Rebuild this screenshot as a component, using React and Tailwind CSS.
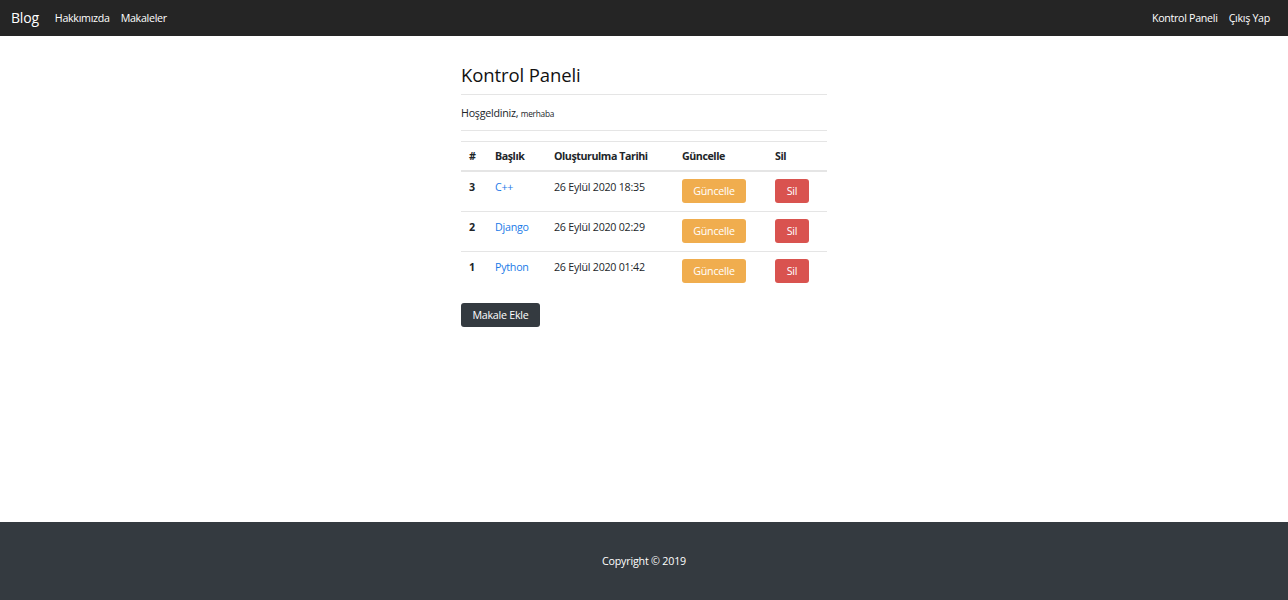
import React from "react";

const rows = [
  { id: 3, title: "C++", date: "26 Eylül 2020 18:35" },
  { id: 2, title: "Django", date: "26 Eylül 2020 02:29" },
  { id: 1, title: "Python", date: "26 Eylül 2020 01:42" },
];

const th =
  "border-b-2 border-[#e5e5e5] px-[8px] pb-[7px] pt-[7px] text-left font-bold leading-[14px] tracking-[-0.45px]";

export default function App() {
  return (
    <div className="flex h-[600px] flex-col bg-white font-['Open_Sans',sans-serif] text-[#212529]">
      <nav className="flex h-[36px] shrink-0 items-center justify-between bg-[#252525] pl-[11px] pr-[18px] text-white">
        <div className="flex items-center">
          <span className="text-[14px] leading-none tracking-[-0.2px]">Blog</span>
          <span className="ml-[16px] text-[10.7px] tracking-[-0.3px]">Hakkımızda</span>
          <span className="ml-[11px] text-[10.7px] tracking-[-0.3px]">Makaleler</span>
        </div>
        <div className="flex items-center text-[10.7px] tracking-[-0.3px]">
          <span>Kontrol Paneli</span>
          <span className="ml-[11px]">Çıkış Yap</span>
        </div>
      </nav>
      <main className="flex flex-1 justify-center">
        <div className="w-[366px] pt-[27px]">
          <h3 className="text-[18.5px] font-medium leading-[24px] tracking-[-0.1px] text-[#111]">Kontrol Paneli</h3>
          <hr className="mt-[7px] border-t border-[#e5e5e5]" />
          <p className="mt-[10px] text-[10.7px] leading-[16px] tracking-[-0.25px]">
            Hoşgeldiniz, <small className="text-[8.3px]">merhaba</small>
          </p>
          <hr className="mt-[8px] border-t border-[#e5e5e5]" />
          <table className="mt-[10px] w-full border-collapse text-[10.7px] tracking-[-0.25px]">
            <thead>
              <tr className="border-t border-[#e5e5e5]">
                <th className={`w-[26px] ${th}`}>#</th>
                <th className={`w-[59px] ${th}`}>Başlık</th>
                <th className={`w-[128px] ${th}`}>Oluşturulma Tarihi</th>
                <th className={`w-[93px] ${th}`}>Güncelle</th>
                <th className={th}>Sil</th>
              </tr>
            </thead>
            <tbody>
              {rows.map((r) => (
                <tr key={r.id} className="border-b border-[#e5e5e5] last:border-b-0">
                  <td className="px-[8px] pt-[8px] align-top font-bold leading-[14px]">{r.id}</td>
                  <td className="px-[8px] pt-[8px] align-top leading-[14px] text-[#1a7ae8]">{r.title}</td>
                  <td className="px-[8px] pt-[8px] align-top leading-[14px]">{r.date}</td>
                  <td className="px-[8px] pb-[8px] pt-[7px] align-top">
                    <span className="flex h-[24px] w-[64px] items-center justify-center rounded-[3px] bg-[#f0ad4e] text-white">Güncelle</span>
                  </td>
                  <td className="px-[8px] pb-[8px] pt-[7px] align-top">
                    <span className="flex h-[24px] w-[34px] items-center justify-center rounded-[3px] bg-[#d9534f] text-white">Sil</span>
                  </td>
                </tr>
              ))}
            </tbody>
          </table>
          <div className="mt-[10px]">
            <span className="inline-flex h-[24px] w-[79px] items-center justify-center rounded-[3px] bg-[#343a40] text-[10.7px] tracking-[-0.25px] text-white">Makale Ekle</span>
          </div>
        </div>
      </main>
      <footer className="flex h-[78px] shrink-0 items-center justify-center bg-[#343a40] text-[10.7px] tracking-[-0.2px] text-white">
        Copyright © 2019
      </footer>
    </div>
  );
}
